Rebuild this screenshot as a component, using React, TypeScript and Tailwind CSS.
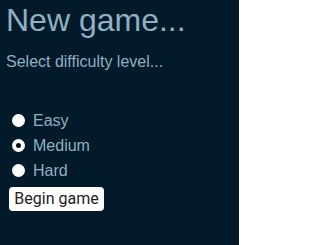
const levels = [
  { label: "Easy", checked: false },
  { label: "Medium", checked: true },
  { label: "Hard", checked: false },
];

function Radio({ checked }: { checked: boolean }) {
  return (
    <span className="flex h-[13px] w-[13px] items-center justify-center rounded-full bg-white">
      {checked && <span className="h-[5px] w-[5px] rounded-full bg-[#0b0f14]" />}
    </span>
  );
}

export default function App() {
  return (
    <div className="h-[245px] w-[239px] bg-[#021a29] px-[6px] pt-[2px] font-['Liberation_Sans',Arial,sans-serif] text-[#8fb1c2]">
      <h1 className="text-[32px] leading-[37px]">New game...</h1>
      <p className="mt-[14px] text-[16px] leading-[18px]">Select difficulty level...</p>

      <div className="mt-[37px] flex flex-col">
        {levels.map((level) => (
          <label key={level.label} className="flex h-[25px] items-center text-[16px] leading-[18px]">
            <span className="ml-[6px] mr-[8px]">
              <Radio checked={level.checked} />
            </span>
            {level.label}
          </label>
        ))}
      </div>

      <button className="ml-[3px] mt-[4px] flex h-[24px] w-[95px] items-center justify-center rounded-[4px] bg-white font-['Roboto',sans-serif] text-[16px] leading-[18px] text-[#222222]">
        Begin game
      </button>
    </div>
  );
}
